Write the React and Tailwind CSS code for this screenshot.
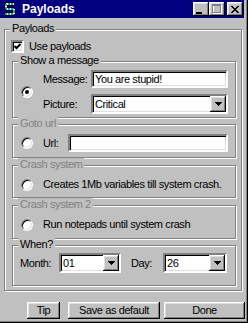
import clsx from 'clsx'

const sunken =
  'bg-white border-2 border-t-[#808080] border-l-[#808080] border-r-white border-b-white shadow-[inset_1px_1px_0_#000,inset_-1px_-1px_0_#dfdfdf]'
const raised =
  'bg-[#c0c0c0] shadow-[inset_-1px_-1px_0_#000,inset_1px_1px_0_#fff,inset_-2px_-2px_0_#808080,inset_2px_2px_0_#dfdfdf]'

function AppIcon() {
  return (
    <svg width="16" height="16" viewBox="0 0 16 16" shapeRendering="crispEdges">
      <path d="M12 3H6Q4 3 4 5V6Q4 8 6 8H10Q12 8 12 10V11Q12 13 10 13H3" fill="none" stroke="#000" strokeWidth="4" />
      <path d="M12 3H6Q4 3 4 5V6Q4 8 6 8H10Q12 8 12 10V11Q12 13 10 13H3" fill="none" stroke="#00a8a8" strokeWidth="2" />
      <path d="M12 3H6Q4 3 4 5V6Q4 8 6 8H10Q12 8 12 10V11Q12 13 10 13H3" fill="none" stroke="#fff" strokeWidth="2" strokeDasharray="1 2" />
    </svg>
  )
}

const X_PIXELS = [
  [0, 0], [1, 0], [6, 0], [7, 0],
  [1, 1], [2, 1], [5, 1], [6, 1],
  [2, 2], [3, 2], [4, 2], [5, 2],
  [3, 3], [4, 3],
  [2, 4], [3, 4], [4, 4], [5, 4],
  [1, 5], [2, 5], [5, 5], [6, 5],
  [0, 6], [1, 6], [6, 6], [7, 6],
]

function TitleBtn({ kind, className }) {
  return (
    <span className={clsx(raised, 'w-[16px] h-[14px] flex items-center justify-center', className)}>
      {kind === 'min' && (
        <svg width="8" height="7" shapeRendering="crispEdges" className="translate-x-[-1px] translate-y-[1px]">
          <rect x="0" y="5" width="6" height="2" fill="#000" />
        </svg>
      )}
      {kind === 'max' && (
        <svg width="10" height="10" shapeRendering="crispEdges">
          <rect x="1.5" y="1.5" width="8" height="8" fill="none" stroke="#fff" />
          <rect x="0.5" y="0.5" width="8" height="8" fill="none" stroke="#808080" />
          <rect x="0" y="1" width="9" height="1" fill="#808080" />
        </svg>
      )}
      {kind === 'close' && (
        <svg width="8" height="7" shapeRendering="crispEdges">
          {X_PIXELS.map(([x, y]) => (
            <rect key={`${x}-${y}`} x={x} y={y} width="1" height="1" fill="#000" />
          ))}
        </svg>
      )}
    </span>
  )
}

// etched group box, label sits on the top edge
function Group({ label, disabled, className, children }) {
  return (
    <div className={clsx('relative border border-[#808080] shadow-[inset_1px_1px_0_#fff,1px_1px_0_#fff]', className)}>
      <span
        className={clsx(
          'absolute z-10 top-[-8px] left-[5px] h-[14px] px-[2px] bg-[#c0c0c0] leading-[13px] whitespace-nowrap',
          disabled ? 'text-[#808080]' : 'text-black'
        )}
      >
        {label}
      </span>
      {children}
    </div>
  )
}

function Radio({ checked }) {
  return (
    <span className="w-[12px] h-[12px] shrink-0 rounded-full bg-white border border-t-[#808080] border-l-[#808080] border-r-white border-b-white shadow-[inset_1px_1px_0_#000,inset_-1px_-1px_0_#dfdfdf] flex items-center justify-center">
      {checked && <span className="w-[4px] h-[4px] rounded-full bg-black" />}
    </span>
  )
}

function Checkbox() {
  return (
    <span className={clsx(sunken, 'w-[13px] h-[13px] shrink-0 flex items-center justify-center')}>
      <svg width="7" height="7" viewBox="0 0 7 7">
        <polyline points="0.5,3 2.5,5 6.5,1" fill="none" stroke="#000" strokeWidth="2" />
      </svg>
    </span>
  )
}

function Arrow() {
  return (
    <svg width="7" height="4" shapeRendering="crispEdges">
      <rect x="0" y="0" width="7" height="1" fill="#000" />
      <rect x="1" y="1" width="5" height="1" fill="#000" />
      <rect x="2" y="2" width="3" height="1" fill="#000" />
      <rect x="3" y="3" width="1" height="1" fill="#000" />
    </svg>
  )
}

function Select({ value, className }) {
  return (
    <div className={clsx(sunken, 'h-[20px] flex items-center', className)}>
      <span className="flex-1 pl-[2px]">{value}</span>
      <span className={clsx(raised, 'w-[16px] h-[16px] flex items-center justify-center')}>
        <Arrow />
      </span>
    </div>
  )
}

function Field({ value, className }) {
  return <div className={clsx(sunken, 'h-[18px] flex items-center pl-[2px]', className)}>{value}</div>
}

function Button({ children, className }) {
  return (
    <button className={clsx(raised, 'h-[17px] flex items-center justify-center text-[11px]', className)}>
      {children}
    </button>
  )
}

export default function App() {
  return (
    <div className="w-[248px] h-[323px] overflow-hidden bg-[#c0c0c0] shadow-[inset_-1px_-1px_0_#000,inset_-2px_-2px_0_#808080] font-['Liberation_Sans',Arial,sans-serif] text-[11px] leading-[13px] tracking-[-0.4px] text-black">
      {/* Title bar */}
      <div className="w-[244px] h-[18px] bg-[#000080] flex items-center pl-[2px] pr-[1px]">
        <AppIcon />
        <span className="ml-[4px] text-white font-bold text-[12px] tracking-normal">Payloads</span>
        <div className="ml-auto flex items-center">
          <TitleBtn kind="min" />
          <TitleBtn kind="max" />
          <TitleBtn kind="close" className="ml-[2px]" />
        </div>
      </div>

      <Group label="Payloads" className="mt-[11px] ml-[4px] w-[238px] pt-[10px] pb-[4px]">
        <label className="flex items-center h-[13px] pl-[6px]">
          <Checkbox />
          <span className="ml-[5px]">Use payloads</span>
        </label>

        <Group label="Show a message" className="mt-[8px] ml-[7px] w-[224px] pt-[8px] pb-[3px] pl-[8px] flex items-center">
          <Radio checked />
          <div className="ml-[10px] flex flex-col gap-[6px]">
            <div className="flex items-center">
              <span className="w-[48px]">Message:</span>
              <Field value="You are stupid!" className="w-[137px]" />
            </div>
            <div className="flex items-center">
              <span className="w-[48px]">Picture:</span>
              <Select value="Critical" className="w-[137px]" />
            </div>
          </div>
        </Group>

        <Group label="Goto url" disabled className="mt-[6px] ml-[7px] w-[224px] pt-[9px] pb-[5px] pl-[8px] flex items-center">
          <Radio />
          <span className="ml-[10px] w-[25px]">Url:</span>
          <Field value="" className="w-[160px]" />
        </Group>

        <Group label="Crash system" disabled className="mt-[7px] ml-[7px] w-[224px] pt-[12px] pb-[6px] pl-[8px]">
          <div className="flex items-center h-[13px] whitespace-nowrap">
            <Radio />
            <span className="ml-[10px]">Creates 1Mb variables till system crash.</span>
          </div>
        </Group>

        <Group label="Crash system 2" disabled className="mt-[7px] ml-[7px] w-[224px] pt-[12px] pb-[7px] pl-[8px]">
          <div className="flex items-center h-[13px] whitespace-nowrap">
            <Radio />
            <span className="ml-[10px]">Run notepads until system crash</span>
          </div>
        </Group>

        <Group label="When?" className="mt-[6px] ml-[7px] w-[224px] pt-[7px] pb-[12px] pl-[7px] flex items-center">
          <span className="w-[39px]">Month:</span>
          <Select value="01" className="w-[62px]" />
          <span className="ml-[10px] w-[32px]">Day:</span>
          <Select value="26" className="w-[64px]" />
        </Group>
      </Group>

      <div className="mt-[11px] pl-[27px] flex">
        <Button className="w-[33px]">Tip</Button>
        <Button className="ml-[8px] w-[92px]">Save as default</Button>
        <Button className="ml-[4px] w-[81px]">Done</Button>
      </div>
    </div>
  )
}
